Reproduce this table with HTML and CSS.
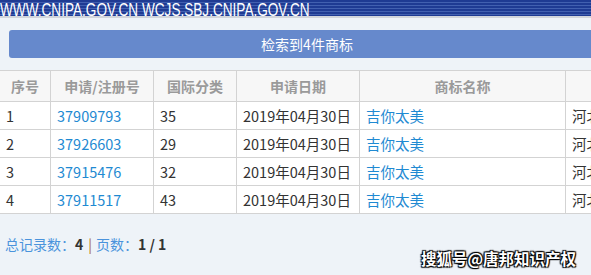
FILE: index.html
```html
<!DOCTYPE html>
<html lang="zh-CN">
<head>
<meta charset="utf-8">
<title>商标检索</title>
<link rel="stylesheet" href="styles.css">
</head>
<body>
<header class="banner"><span class="site">WWW.CNIPA.GOV.CN WCJS.SBJ.CNIPA.GOV.CN</span></header>
<div class="rule"></div>
<main class="content">
  <div class="result-bar">检索到4件商标</div>
  <table class="grid">
    <colgroup>
      <col class="c1"><col class="c2"><col class="c3"><col class="c4"><col class="c5"><col class="c6">
    </colgroup>
    <thead>
      <tr><th>序号</th><th>申请/注册号</th><th>国际分类</th><th>申请日期</th><th>商标名称</th><th>申请人名称</th></tr>
    </thead>
    <tbody>
      <tr><td>1</td><td><a class="link">37909793</a></td><td>35</td><td>2019年04月30日</td><td><a class="link">吉你太美</a></td><td>河北</td></tr>
      <tr><td>2</td><td><a class="link">37926603</a></td><td>29</td><td>2019年04月30日</td><td><a class="link">吉你太美</a></td><td>河北</td></tr>
      <tr><td>3</td><td><a class="link">37915476</a></td><td>32</td><td>2019年04月30日</td><td><a class="link">吉你太美</a></td><td>河北</td></tr>
      <tr><td>4</td><td><a class="link">37911517</a></td><td>43</td><td>2019年04月30日</td><td><a class="link">吉你太美</a></td><td>河北</td></tr>
    </tbody>
  </table>
  <div class="summary"><span class="label">总记录数：</span><b class="num">4</b><span class="sep">|</span><span class="label">页数：</span><b class="num">1 / 1</b></div>
</main>
<div class="watermark">搜狐号@唐邦知识产权</div>
</body>
</html>
```

FILE: styles.css
```css
html, body {
  margin: 0;
  padding: 0;
}
body {
  width: 591px;
  height: 275px;
  overflow: hidden;
  background: #eef3f8;
  font-family: "Noto Sans CJK SC", "Noto Sans", sans-serif;
  font-size: 14px;
  color: #333;
  position: relative;
}
.banner {
  height: 16px;
  overflow: hidden;
  background: repeating-linear-gradient(to bottom, #1f3b93 0px, #1f3b93 2px, #4260b0 2px, #4260b0 3px);
}
.site {
  display: inline-block;
  color: #fff;
  font-family: "Liberation Sans", Arial, sans-serif;
  font-size: 18px;
  line-height: 16px;
  margin-top: -1px;
  white-space: nowrap;
  transform: scaleX(0.755);
  transform-origin: left top;
}
.rule {
  height: 2px;
  background: #d2d6dc;
}
.content {
  padding: 12px 0 0 5px;
}
.result-bar {
  margin-left: 4px;
  width: 596px;
  height: 28px;
  border-radius: 3px;
  background: #6689cc;
  color: #fff;
  font-size: 14px;
  line-height: 28px;
  text-align: center;
}
.grid {
  margin: 12px 0 0 -6px;
  border-collapse: collapse;
  table-layout: fixed;
  width: 686px;
  background: #fff;
}
.c1 { width: 51px; }
.c2 { width: 103px; }
.c3 { width: 83px; }
.c4 { width: 123px; }
.c5 { width: 206px; }
.c6 { width: 120px; }
.grid th, .grid td {
  border: 1px solid #d3d3d3;
  padding: 0 0 0 6px;
  text-align: left;
  white-space: nowrap;
  overflow: hidden;
  line-height: 20px;
}
.grid th {
  height: 30px;
  padding: 0;
  background: #f7f7f7;
  color: #9a9a9a;
  font-weight: bold;
  text-align: center;
}
.grid td {
  height: 27px;
  font-size: 14.5px;
  color: #333;
}
.link {
  color: #1f8ad2;
  text-decoration: none;
}
.summary {
  margin-top: 21px;
  line-height: 18px;
  font-size: 14px;
}
.label {
  color: #4a93dc;
}
.num {
  color: #333;
  font-weight: bold;
}
.sep {
  color: #a86a2a;
  margin: 0 4px 0 5px;
}
.watermark {
  position: absolute;
  right: 15px;
  bottom: 8px;
  color: #fff;
  font-size: 15.5px;
  font-weight: bold;
  line-height: 18px;
  text-shadow: 1px 1px 1px #000, -1px -1px 1px #000, 1px -1px 1px #000, -1px 1px 1px #000;
}
```
